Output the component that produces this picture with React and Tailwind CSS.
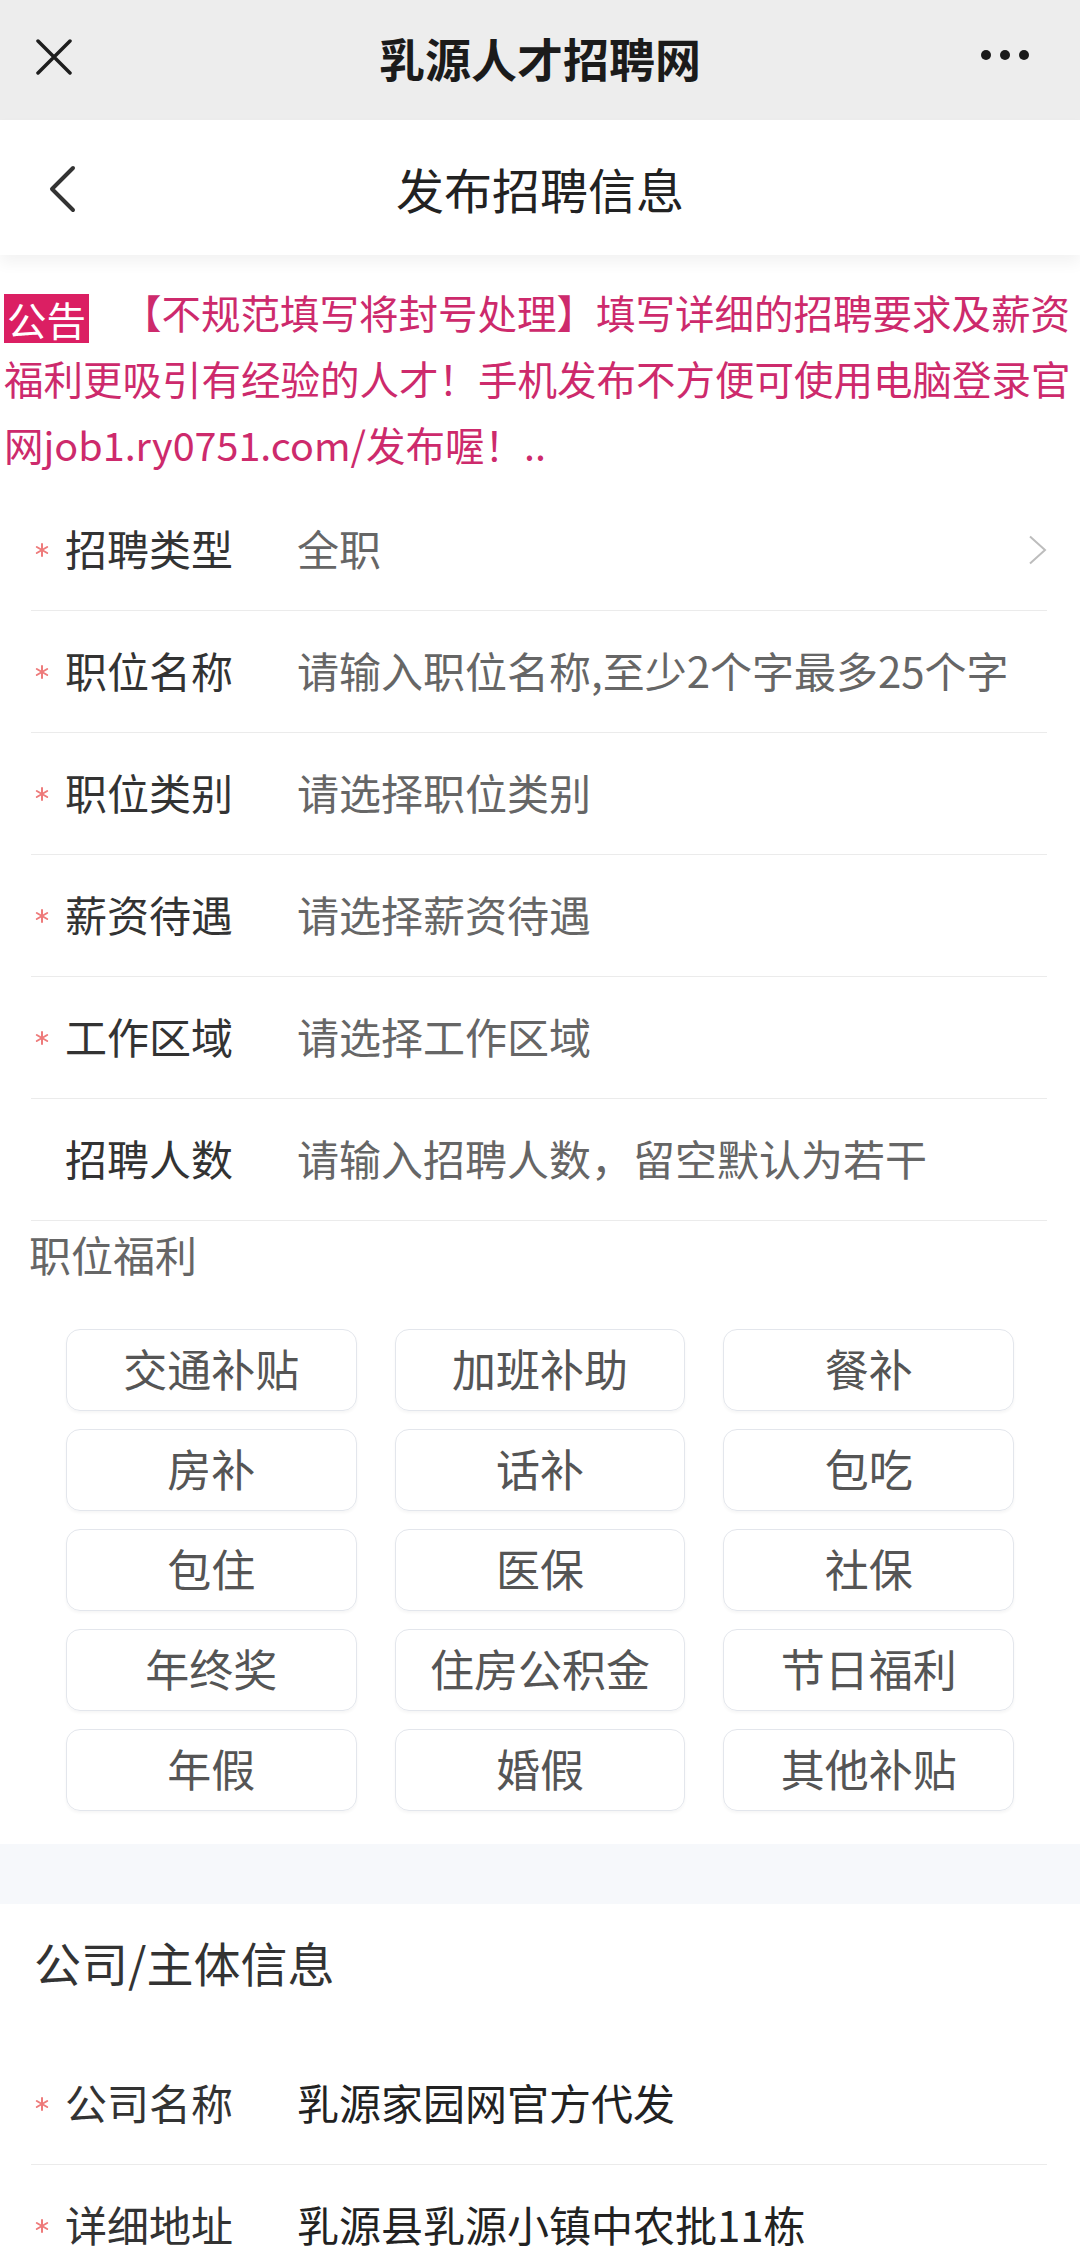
import React from "react";

const jobRows = [
  { label: "招聘类型", value: "全职", required: true, arrow: true },
  { label: "职位名称", value: "请输入职位名称,至少2个字最多25个字", required: true },
  { label: "职位类别", value: "请选择职位类别", required: true },
  { label: "薪资待遇", value: "请选择薪资待遇", required: true },
  { label: "工作区域", value: "请选择工作区域", required: true },
  { label: "招聘人数", value: "请输入招聘人数，留空默认为若干", required: false },
];

const welfareTags = [
  "交通补贴", "加班补助", "餐补",
  "房补", "话补", "包吃",
  "包住", "医保", "社保",
  "年终奖", "住房公积金", "节日福利",
  "年假", "婚假", "其他补贴",
];

const companyRows = [
  { label: "公司名称", value: "乳源家园网官方代发" },
  { label: "详细地址", value: "乳源县乳源小镇中农批11栋" },
];

function Asterisk() {
  return (
    <svg width="14" height="14" viewBox="0 0 14 14" aria-hidden="true">
      <g stroke="#ee7b7b" strokeWidth="2" strokeLinecap="round">
        <line x1="7" y1="1" x2="7" y2="13" />
        <line x1="1.8" y1="4" x2="12.2" y2="10" />
        <line x1="1.8" y1="10" x2="12.2" y2="4" />
      </g>
    </svg>
  );
}

function FormRow({ label, value, required, arrow, dark }) {
  return (
    <div className="flex h-[122px] items-center border-b border-[#ebebeb]">
      <span className="flex w-[34px] shrink-0 items-center pl-[4px]">{required && <Asterisk />}</span>
      <span className="w-[232px] shrink-0 pb-[4px] text-[42px] text-[#333]">{label}</span>
      <span className={`flex-1 whitespace-nowrap pb-[4px] text-[42px] ${dark ? "text-[#222]" : "text-[#666]"}`}>{value}</span>
      {arrow && (
        <svg width="19" height="30" viewBox="0 0 19 30" aria-hidden="true">
          <path d="M2 1.5 L17 15 L2 28.5" fill="none" stroke="#bdbdbd" strokeWidth="2" />
        </svg>
      )}
    </div>
  );
}

function App() {
  return (
    <div className="w-[1080px] bg-white" style={{ fontFamily: '"Noto Sans CJK SC", "Noto Sans", sans-serif' }}>
      {/* wechat top bar */}
      <div className="relative flex h-[120px] items-center justify-center bg-[#ededed]">
        <svg className="absolute left-[36px] top-[39px]" width="36" height="36" viewBox="0 0 36 36" aria-hidden="true">
          <path d="M2 2 L34 34 M34 2 L2 34" stroke="#1e1e1e" strokeWidth="3.5" strokeLinecap="round" />
        </svg>
        <h1 className="-mt-[6px] text-[46px] font-bold text-[#1b1b1b]">乳源人才招聘网</h1>
        <div className="absolute left-[981px] top-[50px] flex gap-[9px]">
          <span className="size-[10px] rounded-full bg-[#1b1b1b]" />
          <span className="size-[10px] rounded-full bg-[#1b1b1b]" />
          <span className="size-[10px] rounded-full bg-[#1b1b1b]" />
        </div>
      </div>

      {/* page header */}
      <div className="relative z-10 flex h-[135px] items-center justify-center bg-white shadow-[0_8px_14px_rgba(0,0,0,0.05)]">
        <svg className="absolute left-[47px] top-[45px]" width="30" height="48" viewBox="0 0 30 48" aria-hidden="true">
          <path d="M26 3 L5 24 L26 45" fill="none" stroke="#333" strokeWidth="4" strokeLinecap="round" strokeLinejoin="round" />
        </svg>
        <h2 className="text-[48px] text-[#222]">发布招聘信息</h2>
      </div>

      {/* notice */}
      <div className="pl-[4px] pt-[24px] text-[39.5px] leading-[66px] text-[#cd2a6c]">
        <div className="whitespace-nowrap">
          <span className="mr-[33px] inline-block h-[49px] bg-[#db1f63] px-[3px] align-middle leading-[49px] text-white">公告</span>
          【不规范填写将封号处理】填写详细的招聘要求及薪资
        </div>
        <div className="whitespace-nowrap">福利更吸引有经验的人才！手机发布不方便可使用电脑登录官</div>
        <div className="whitespace-nowrap">网job1.ry0751.com/发布喔！..</div>
      </div>

      {/* job form */}
      <div className="mx-[31px] mr-[33px] mt-[12px]">
        {jobRows.map((row) => (
          <FormRow key={row.label} {...row} />
        ))}
      </div>

      <div className="flex h-[64px] items-center pl-[29px] text-[42px] text-[#666]">职位福利</div>

      <div className="ml-[66px] mt-[44px] grid w-[948px] grid-cols-3 gap-x-[38px] gap-y-[18px]">
        {welfareTags.map((tag) => (
          <div
            key={tag}
            className="flex h-[82px] items-center justify-center rounded-[14px] border border-[#e3e6ec] pb-[5px] text-[44px] text-[#555] shadow-[0_2px_3px_rgba(0,0,0,0.04)]"
          >
            {tag}
          </div>
        ))}
      </div>

      <div className="mt-[33px] h-[60px] bg-[#f6f8fb]" />

      {/* company */}
      <div className="flex h-[120px] items-center pb-[4px] pl-[34px] text-[47px] text-[#333]">公司/主体信息</div>
      <div className="mx-[31px] mr-[33px] mt-[19px]">
        {companyRows.map((row) => (
          <FormRow key={row.label} {...row} required dark />
        ))}
      </div>
    </div>
  );
}

export default App;
